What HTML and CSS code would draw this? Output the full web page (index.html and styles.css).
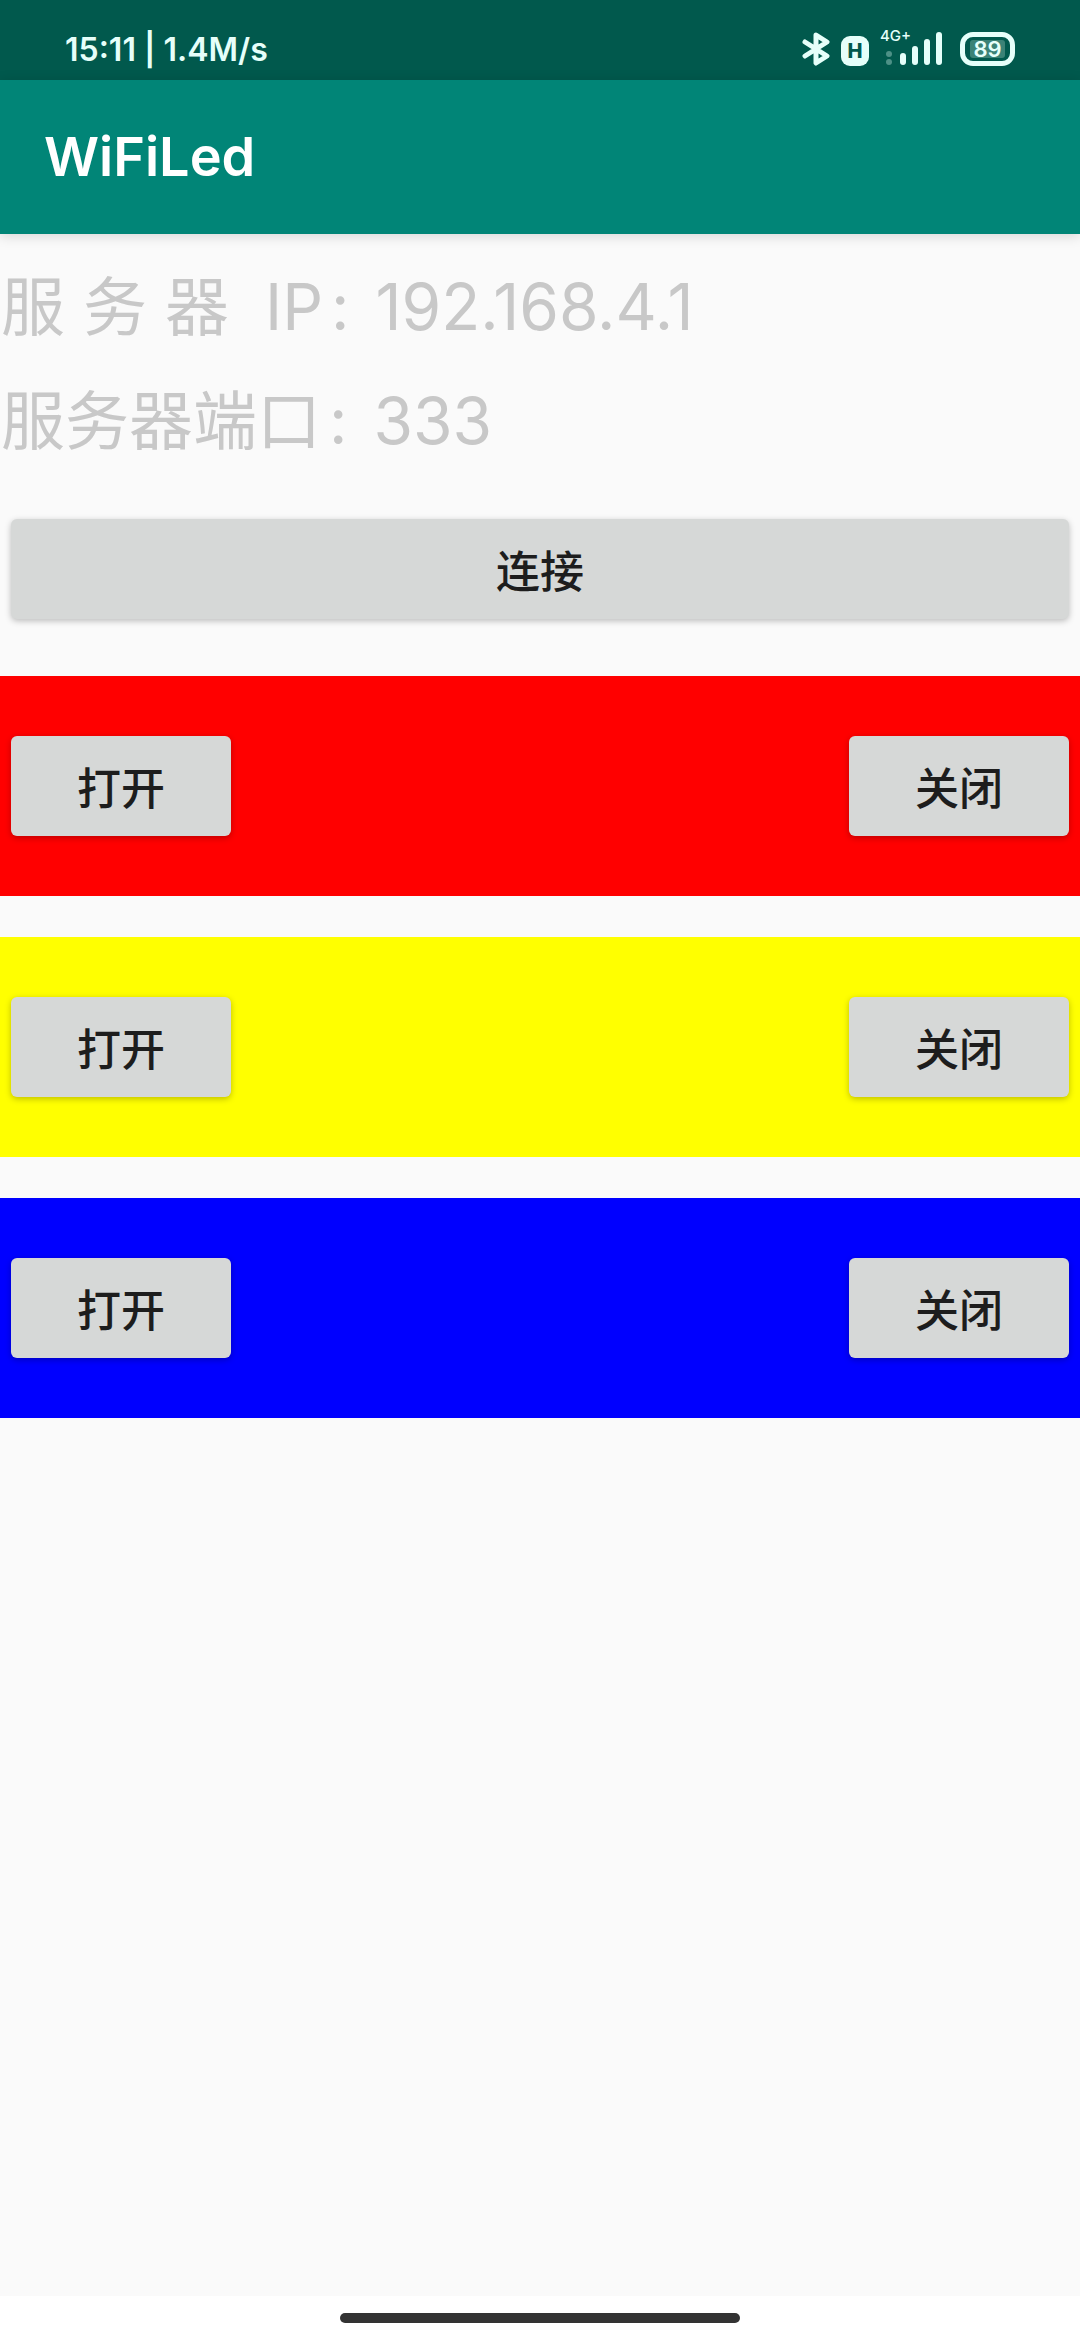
FILE: index.html
```html
<!DOCTYPE html>
<html lang="zh-CN">
<head>
<meta charset="utf-8">
<meta name="viewport" content="width=device-width, initial-scale=1">
<title>WiFiLed</title>
<link rel="stylesheet" href="styles.css">
</head>
<body>
<div class="screen">
  <div class="status-bar">
    <span class="status-time">15:11 | 1.4M/s</span>
    <div class="status-icons">
      <svg class="icon-bluetooth" width="28" height="34" viewBox="0 0 28 34" aria-label="Bluetooth">
        <path d="M3 10 L25 24 L14 31 V3 L25 10 L3 24" fill="none" stroke="currentColor" stroke-width="5" stroke-linecap="round" stroke-linejoin="round"/>
      </svg>
      <span class="badge-h">H</span>
      <div class="signal">
        <span class="signal-type">4G+</span>
        <svg width="62" height="34" viewBox="0 0 62 34" aria-label="Signal">
          <g fill="#4d9187"><circle cx="9" cy="22" r="3"/><circle cx="9" cy="30" r="3"/></g>
          <g fill="currentColor">
            <rect x="20" y="21" width="6" height="12" rx="3"/>
            <rect x="32" y="14" width="6" height="19" rx="3"/>
            <rect x="44" y="7" width="6" height="26" rx="3"/>
            <rect x="56" y="0" width="6" height="33" rx="3"/>
          </g>
        </svg>
      </div>
      <span class="battery"><span class="battery-level">89</span></span>
    </div>
  </div>
  <header class="app-bar"><h1 class="app-title">WiFiLed</h1></header>
  <main class="content">
    <p class="server-line">服 务 器&nbsp; IP<span class="colon">:</span> 192.168.4.1</p>
    <p class="server-line">服务器端口<span class="colon">:</span> 333</p>
    <button class="btn btn-connect" type="button">连接</button>
    <div class="led-list">
      <section class="led led-red">
        <button class="btn" type="button">打开</button>
        <button class="btn" type="button">关闭</button>
      </section>
      <section class="led led-yellow">
        <button class="btn" type="button">打开</button>
        <button class="btn" type="button">关闭</button>
      </section>
      <section class="led led-blue">
        <button class="btn" type="button">打开</button>
        <button class="btn" type="button">关闭</button>
      </section>
    </div>
  </main>
  <div class="nav-bar"><span class="nav-handle"></span></div>
</div>
</body>
</html>
```
FILE: styles.css
```css
* {
  box-sizing: border-box;
}

body {
  margin: 0;
  background: #fafafa;
  font-family: Inter, "Noto Sans CJK SC", sans-serif;
}

.screen {
  display: flex;
  flex-direction: column;
  min-height: 100vh;
}

.status-bar {
  display: flex;
  justify-content: space-between;
  height: 80px;
  padding: 32px 65px 0;
  background: #01594d;
  color: #e6fffa;
}

.status-time {
  font-size: 32px;
  font-weight: 600;
  line-height: 36px;
}

.status-icons {
  display: flex;
  align-items: flex-start;
}

.badge-h {
  width: 28px;
  height: 30px;
  margin: 4px 11px 0;
  border-radius: 9px;
  background: currentColor;
  font-size: 20px;
  font-weight: 800;
  line-height: 30px;
  text-align: center;
}

.badge-h::first-letter {
  color: #01594d;
}

.signal {
  position: relative;
}

.signal svg,
.icon-bluetooth {
  display: block;
}

.signal-type {
  position: absolute;
  top: -4px;
  left: 0;
  font-size: 15px;
  font-weight: 500;
  line-height: 16px;
}

.battery {
  display: flex;
  align-items: center;
  justify-content: center;
  width: 55px;
  height: 34px;
  margin-left: 18px;
  border: 5px solid currentColor;
  border-radius: 13px;
}

.battery-level {
  width: 35px;
  border-radius: 3px;
  background: #3b8276;
  font-size: 22px;
  font-weight: 600;
  line-height: 18px;
  text-align: center;
}

.app-bar {
  position: relative;
  display: flex;
  align-items: center;
  height: 154px;
  padding: 0 44px;
  background: #018577;
  box-shadow: 0 2px 12px rgba(0, 0, 0, 0.15);
}

.app-title {
  margin: 0;
  color: #fff;
  font-size: 54px;
  font-weight: 600;
  line-height: 64px;
}

.content {
  flex: 1;
  padding-top: 16px;
}

.server-line {
  height: 114px;
  margin: 0;
  padding: 0 1px;
  color: #c8c8c8;
  font-size: 64px;
  line-height: 114px;
  white-space: nowrap;
}

.colon {
  margin: 0 8px;
}

.btn {
  width: 220px;
  height: 100px;
  padding: 0;
  border: 0;
  border-radius: 6px;
  background: #d6d8d7;
  box-shadow: 0 2px 6px rgba(0, 0, 0, 0.25);
  color: #1d1d1d;
  font-family: "Noto Sans CJK SC", sans-serif;
  font-size: 44px;
  font-weight: 500;
  line-height: 64px;
}

.btn-connect {
  display: block;
  width: calc(100% - 22px);
  margin: 41px 11px 57px;
}

.led-list {
  display: flex;
  flex-direction: column;
  gap: 41px;
}

.led {
  display: flex;
  align-items: center;
  justify-content: space-between;
  padding: 60px 11px;
}

.led-red {
  background: #f00;
}

.led-yellow {
  background: #ff0;
}

.led-blue {
  background: #00f;
}

.nav-bar {
  display: flex;
  justify-content: center;
  height: 44px;
  padding-top: 17px;
  background: #fff;
}

.nav-handle {
  width: 37%;
  height: 10px;
  border-radius: 5px;
  background: #333;
}
```
